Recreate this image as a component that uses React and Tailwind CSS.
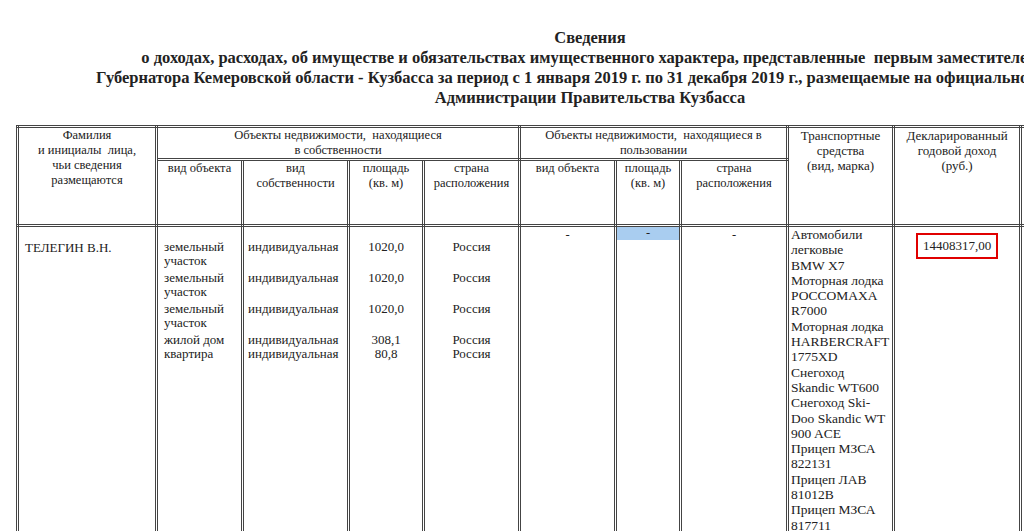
export default function App() {
  const c = "border-[3px] border-double border-[#444] align-top";
  const ff = { fontFamily: '"Liberation Serif", serif' };
  const rows = [
    ["земельный участок", "индивидуальная", "1020,0", "Россия", "h-[31px]"],
    ["земельный участок", "индивидуальная", "1020,0", "Россия", "h-[31px]"],
    ["земельный участок", "индивидуальная", "1020,0", "Россия", "h-[31px]"],
    ["жилой дом", "индивидуальная", "308,1", "Россия", "h-[14px]"],
    ["квартира", "индивидуальная", "80,8", "Россия", "h-[14px]"],
  ];
  const col = (i, align) => (
    <div className={"pt-[13px] " + align}>
      {rows.map((r, k) => (
        <div key={k} className={r[4] + " leading-[14px]"}>{r[i]}</div>
      ))}
    </div>
  );
  const vehicles = ["Автомобили", "легковые", "BMW X7", "Моторная лодка", "РОССОМАХА", "R7000", "Моторная лодка", "HARBERCRAFT", "1775XD", "Снегоход", "Skandic WT600", "Снегоход Ski-", "Doo Skandic WT", "900 ACE", "Прицеп МЗСА", "822131", "Прицеп ЛАВ", "81012В", "Прицеп МЗСА", "817711"];
  return (
    <div className="w-[1024px] h-[531px] overflow-hidden bg-white text-[#222]" style={ff}>
      <div className="w-[1180px] pt-[28px] text-center font-bold text-[16.5px] leading-[20px] whitespace-nowrap">
        <div>Сведения</div>
        <div>о доходах, расходах, об имуществе и обязательствах имущественного характера, представленные&nbsp; первым заместителем</div>
        <div>Губернатора Кемеровской области - Кузбасса за период с 1 января 2019 г. по 31 декабря 2019 г., размещаемые на официальном сайте</div>
        <div>Администрации Правительства Кузбасса</div>
      </div>
      <table style={ff} className="ml-[16px] mt-[17px] border-collapse table-fixed w-[1100px] text-[12.5px] leading-[15px] text-[#222]">
        <colgroup>
          <col className="w-[139px]" /><col className="w-[86px]" /><col className="w-[106px]" /><col className="w-[75px]" /><col className="w-[96px]" />
          <col className="w-[96px]" /><col className="w-[65px]" /><col className="w-[107px]" /><col className="w-[106px]" /><col className="w-[127px]" /><col />
        </colgroup>
        <tbody>
          <tr className="h-[32px]">
            <td rowSpan={2} className={c + " text-center"}>Фамилия<br />и инициалы&nbsp; лица,<br />чьи сведения<br />размещаются</td>
            <td colSpan={4} className={c + " text-center"}>Объекты недвижимости,&nbsp; находящиеся<br />в собственности</td>
            <td colSpan={3} className={c + " text-center"}>Объекты недвижимости,&nbsp; находящиеся в<br />пользовании</td>
            <td rowSpan={2} className={c + " text-center text-[13px]"}>Транспортные<br />средства<br />(вид, марка)</td>
            <td rowSpan={2} className={c + " text-center text-[13px]"}>Декларированный<br />годовой доход<br />(руб.)</td>
            <td rowSpan={2} className={c}></td>
          </tr>
          <tr className="h-[66px]">
            <td className={c + " text-center"}>вид объекта</td>
            <td className={c + " text-center"}>вид<br />собственности</td>
            <td className={c + " text-center"}>площадь<br />(кв. м)</td>
            <td className={c + " text-center"}>страна<br />расположения</td>
            <td className={c + " text-center"}>вид объекта</td>
            <td className={c + " text-center"}>площадь<br />(кв. м)</td>
            <td className={c + " text-center"}>страна<br />расположения</td>
          </tr>
          <tr className="h-[310px]">
            <td className={c + " pl-[6px] pt-[13px] text-[13px]"}>ТЕЛЕГИН В.Н.</td>
            <td className={c + " pl-[6px] text-[13px]"}>{col(0, "text-left")}</td>
            <td className={c + " text-[13px]"}>{col(1, "pl-[4px]")}</td>
            <td className={c + " text-[13px]"}>{col(2, "text-center")}</td>
            <td className={c + " text-[13px]"}>{col(3, "text-center")}</td>
            <td className={c + " text-center"}><div className="pt-[1px]">-</div></td>
            <td className={c}><div className="bg-[#a9cdf0] text-center h-[13px] leading-[12px]">-</div></td>
            <td className={c + " text-center"}><div className="pt-[1px]">-</div></td>
            <td className={c + " pl-[2px] text-[13.5px] leading-[15.3px]"}>
              {vehicles.map((v, i) => <div key={i}>{v}</div>)}
            </td>
            <td className={c + " text-center"}>
              <div className="inline-block mt-[6px] border-2 border-[#e00000] px-[5px] py-[3px] text-[13px] leading-[16px]">14408317,00</div>
            </td>
            <td className={c}></td>
          </tr>
        </tbody>
      </table>
    </div>
  );
}
